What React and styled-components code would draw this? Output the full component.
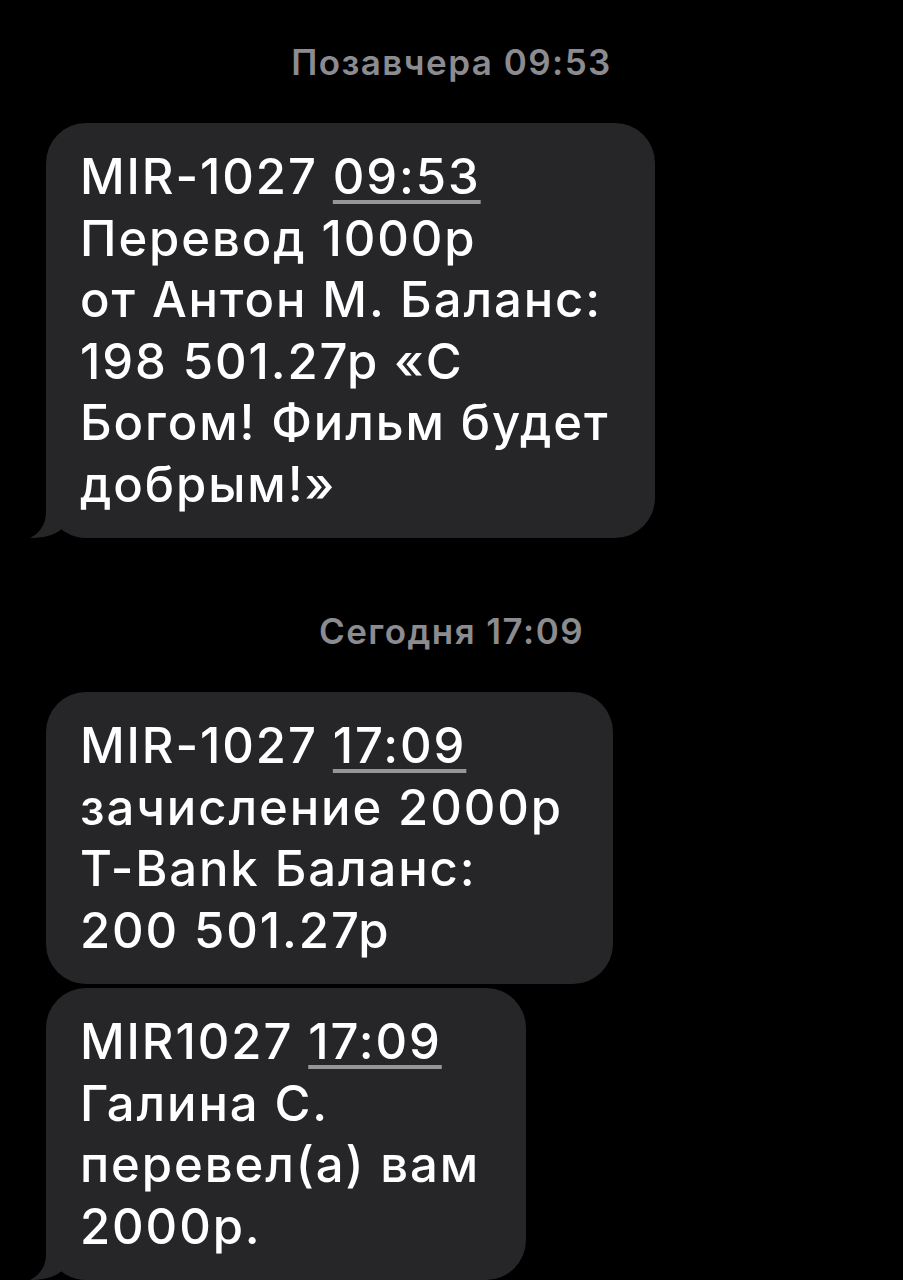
import React from 'react';
import styled, { createGlobalStyle } from 'styled-components';

const GlobalStyle = createGlobalStyle`
  html, body {
    margin: 0;
    padding: 0;
    background: #000;
  }
  body {
    font-family: 'Inter', 'Roboto', 'Noto Sans', sans-serif;
    -webkit-font-smoothing: antialiased;
  }
`;

const Screen = styled.div`
  width: 903px;
  height: 1280px;
  overflow: hidden;
  background: #000;
  display: flex;
  flex-direction: column;
  align-items: flex-start;
  padding: 42px 0 0 46px;
  box-sizing: border-box;
`;

const DateLabel = styled.div`
  align-self: stretch;
  margin-left: -46px;
  text-align: center;
  color: #8b8b90;
  font-size: 35px;
  font-weight: 600;
  letter-spacing: 1.45px;
  line-height: 40px;
  margin-top: ${(props) => props.top || '0'};
  margin-bottom: 41px;
`;

const Bubble = styled.div`
  position: relative;
  width: ${(props) => props.width};
  box-sizing: border-box;
  background: #262628;
  border-radius: 40px;
  padding: 23px 0 23px 34px;
  margin-bottom: ${(props) => props.gap || '0'};
  color: #fff;
  font-size: 49px;
  font-weight: 500;
  line-height: 61.5px;
  letter-spacing: 1.9px;
`;

const Line = styled.div`
  position: relative;
  white-space: nowrap;
`;

const Time = styled.span`
  text-decoration: underline;
  text-decoration-color: #95959a;
  text-decoration-thickness: 4px;
  text-underline-offset: 6px;
`;

const Tail = styled.svg`
  position: absolute;
  left: -18px;
  bottom: 0;
  width: 60px;
  height: 40px;
`;

const BubbleTail = () => (
  <Tail viewBox="0 0 60 40">
    <path
      d="M18 0 L18 14 C18 28 10 36 2 40 C14 40 26 38 35 30 C40 36 48 40 60 40 L60 0 Z"
      fill="#262628"
    />
  </Tail>
);

const messages = [
  {
    label: 'Позавчера 09:53',
    labelTop: '0',
    bubbles: [
      {
        width: '609px',
        tail: true,
        sender: 'MIR-1027',
        time: '09:53',
        lines: ['Перевод 1000р', 'от Антон М. Баланс:', '198 501.27р «С', 'Богом! Фильм будет', 'добрым!»'],
      },
    ],
  },
  {
    label: 'Сегодня 17:09',
    labelTop: '73px',
    bubbles: [
      {
        width: '567px',
        gap: '4px',
        sender: 'MIR-1027',
        time: '17:09',
        lines: ['зачисление 2000р', 'T-Bank Баланс:', '200 501.27р'],
      },
      {
        width: '480px',
        tail: true,
        sender: 'MIR1027',
        time: '17:09',
        lines: ['Галина С.', 'перевел(а) вам', '2000р.'],
      },
    ],
  },
];

const App = () => {
  return (
    <>
      <GlobalStyle />
      <Screen>
        {messages.map((group) => (
          <React.Fragment key={group.label}>
            <DateLabel top={group.labelTop}>{group.label}</DateLabel>
            {group.bubbles.map((b, i) => (
              <Bubble key={i} width={b.width} gap={b.gap}>
                {b.tail && <BubbleTail />}
                <Line>
                  {b.sender} <Time>{b.time}</Time>
                </Line>
                {b.lines.map((l) => (
                  <Line key={l}>{l}</Line>
                ))}
              </Bubble>
            ))}
          </React.Fragment>
        ))}
      </Screen>
    </>
  );
};

export default App;
